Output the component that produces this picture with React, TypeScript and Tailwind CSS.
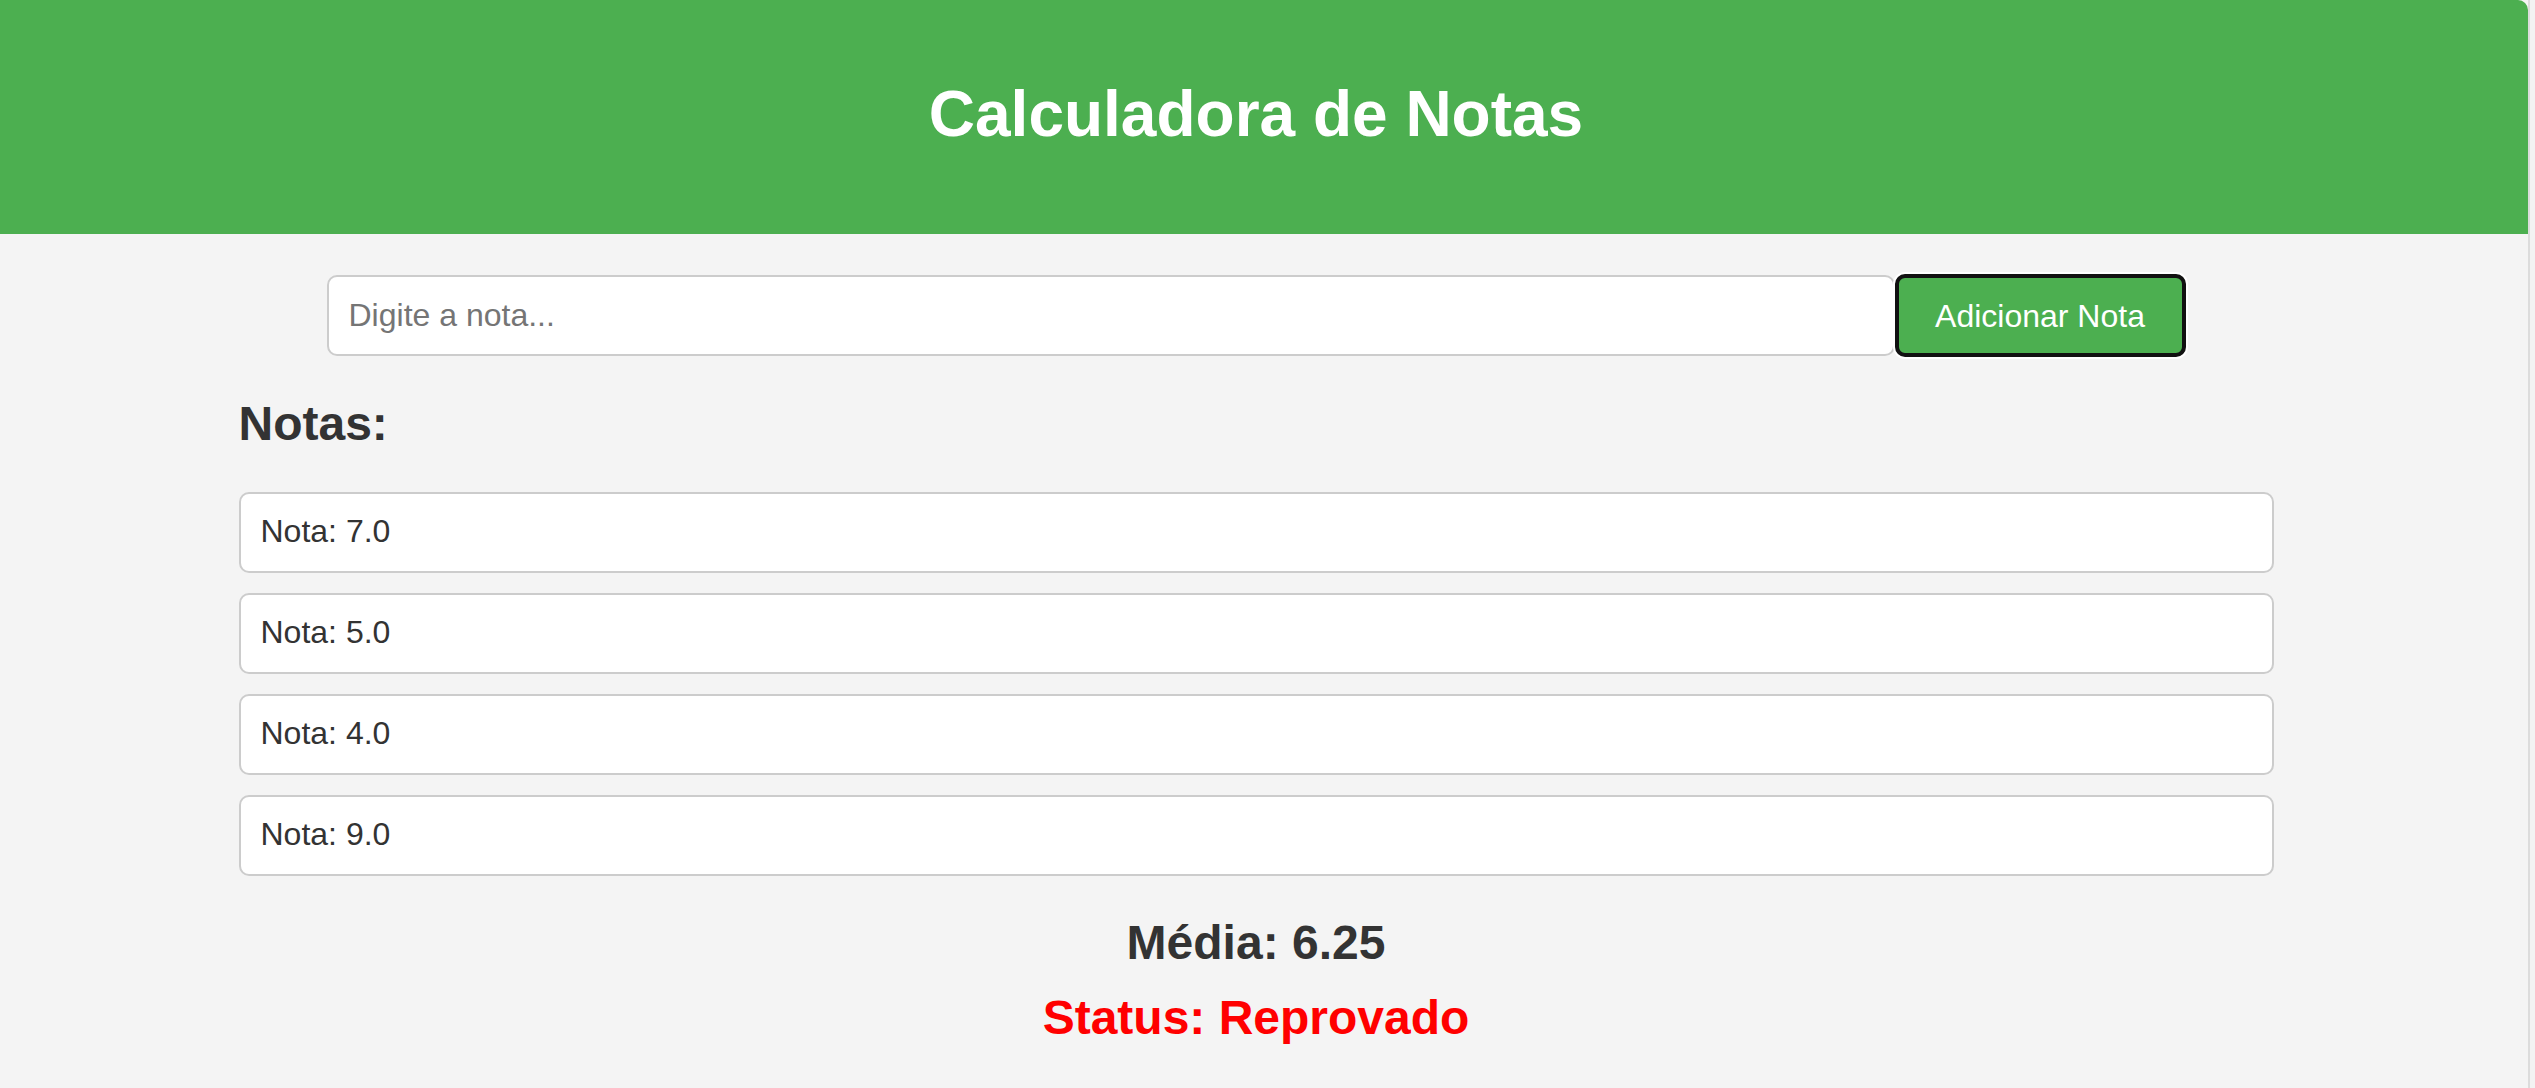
import React from "react";

const notas = ["7.0", "5.0", "4.0", "9.0"];

export default function App() {
  return (
    <div
      className="flex min-h-screen w-[2535px] bg-[#f4f4f4]"
      style={{ fontFamily: '"Liberation Sans", Arial, sans-serif' }}
    >
      <div className="flex w-[2528px] flex-col">
        <header className="w-[2528px] rounded-tr-[10px] bg-[#4CAF50] pr-[16px] pt-[78px] pb-[84px]">
          <h1 className="text-center text-[64px] font-bold leading-[72px] text-white">
            Calculadora de Notas
          </h1>
        </header>
        <main className="flex w-[2512px] flex-col items-center">
          <div className="mt-[40px] flex items-center">
            <input
              type="text"
              placeholder="Digite a nota..."
              className="box-border h-[81px] w-[1568px] rounded-[10px] border-2 border-[#cccccc] bg-white px-[20px] text-[32px] text-[#333] outline-none placeholder:text-[#757575]"
            />
            <button className="box-border h-[83px] w-[291px] rounded-[10px] border-4 border-[#111111] bg-[#4CAF50] text-[32px] text-white shadow-[0_0_0_2px_#ffffff]">
              Adicionar Nota
            </button>
          </div>
          <section className="w-[2035px]">
            <h2 className="mt-[40px] mb-[41px] text-[48px] font-bold leading-[54px] text-[#333333]">
              Notas:
            </h2>
            <ul className="flex flex-col gap-[20px]">
              {notas.map((n) => (
                <li
                  key={n}
                  className="box-border flex h-[81px] items-center rounded-[10px] border-2 border-[#cccccc] bg-white px-[20px] pb-[3px] text-[32px] text-[#333333]"
                >
                  Nota: {n}
                </li>
              ))}
            </ul>
          </section>
          <h2 className="mt-[40px] text-center text-[48px] font-bold leading-[54px] text-[#333333]">
            Média: 6.25
          </h2>
          <h2 className="mt-[21px] text-center text-[48px] font-bold leading-[54px] text-[#ff0000]">
            Status: Reprovado
          </h2>
        </main>
      </div>
      <div className="flex-1 border-l-2 border-[#dcdcdc] bg-[#f3f3f3]" />
    </div>
  );
}
